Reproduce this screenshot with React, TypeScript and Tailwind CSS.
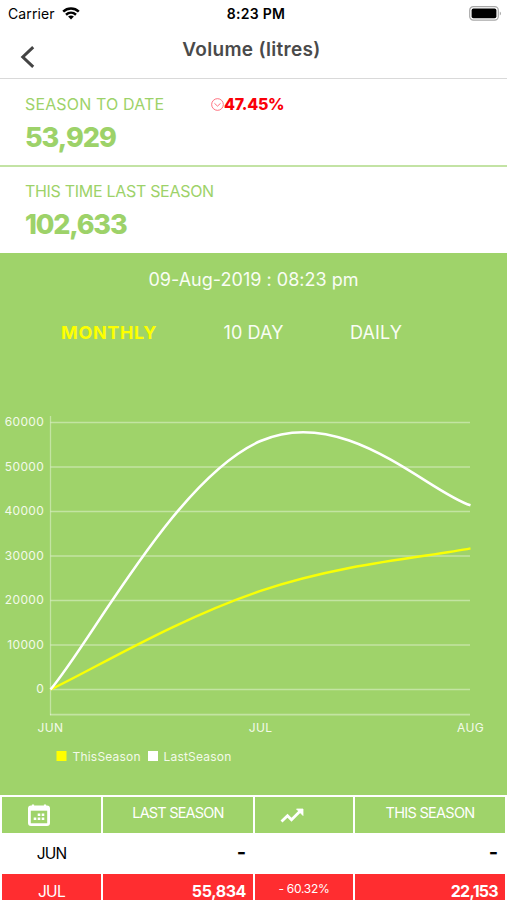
import type { ReactNode } from "react";

type Point = { x: number; y: number };

const ticks = [60000, 50000, 40000, 30000, 20000, 10000, 0];
const months = ["JUN", "JUL", "AUG"];
const thisSeason = [0, 22153, 31700];
const lastSeason = [0, 55834, 41380];

const toX = (i: number) => 50.5 + i * 210;
const toY = (value: number) => 289.5 - value * 0.00445;

// cubic line through every value
function curve(values: number[]) {
  const pts: Point[] = values.map((v, i) => ({ x: toX(i), y: toY(v) }));
  let d = `M${pts[0].x} ${pts[0].y}`;
  for (let i = 1; i < pts.length; i++) {
    const before = pts[Math.max(i - 2, 0)];
    const prev = pts[i - 1];
    const cur = pts[i];
    const next = pts[Math.min(i + 1, pts.length - 1)];
    d += ` C${prev.x + (cur.x - before.x) * 0.2} ${prev.y + (cur.y - before.y) * 0.2}`;
    d += ` ${cur.x - (next.x - prev.x) * 0.2} ${cur.y - (next.y - prev.y) * 0.2}`;
    d += ` ${cur.x} ${cur.y}`;
  }
  return d;
}

function StatusBar() {
  return (
    <div className="grid h-7 grid-cols-3 items-center pl-2 pr-[5px] text-black">
      <div className="flex items-center gap-[7px]">
        <span className="text-[14px] leading-5 tracking-[0.1px]">Carrier</span>
        <svg className="-mt-0.5" width="18" height="13" viewBox="0 0 18 13" fill="none" stroke="#000" strokeWidth="2.5">
          <path d="M1.2 4.6C5.6 0.4 12.4 0.4 16.8 4.6" />
          <path d="M4 7.7C6.9 5.1 11.1 5.1 14 7.7" />
          <path d="M6.1 9.5C7.8 8.1 10.2 8.1 11.9 9.5L9 12.6Z" fill="#000" stroke="none" />
        </svg>
      </div>
      <span className="-mt-0.5 whitespace-nowrap pl-0.5 text-center text-[14px] font-semibold tracking-[0.3px]">
        8:23 PM
      </span>
      <svg className="-mt-0.5 justify-self-end" width="33" height="15" viewBox="0 0 33 15">
        <rect x="0.7" y="0.7" width="28.6" height="13.4" rx="3.6" fill="#fff" stroke="#a8a8a8" strokeWidth="1.2" />
        <rect x="2.6" y="2.6" width="24.8" height="9.6" rx="1.8" fill="#000" />
        <path d="M30.8 5.5C32.2 6 32.2 9 30.8 9.5Z" fill="#999" />
      </svg>
    </div>
  );
}

function Header() {
  return (
    <header className="grid h-[51px] grid-cols-[60px_1fr_60px] border-b border-[#d9d9d9]">
      <button className="flex items-start pl-5 pt-[18px]">
        <svg width="15" height="22" viewBox="0 0 15 22" fill="none" stroke="#444" strokeWidth="3">
          <path d="M13.2 1.2L2.8 11L13.2 20.8" />
        </svg>
      </button>
      <h1 className="pt-2 pr-1 text-center text-[19px] leading-7 font-semibold tracking-[0.3px] text-[#4a4a4a]">
        Volume (litres)
      </h1>
    </header>
  );
}

function Summary() {
  return (
    <section className="text-[#9dd269]">
      <div className="h-[88px] border-b-2 border-[#c3e3a4] pt-[13px] pl-[25px]">
        <div className="flex h-6 items-center">
          <span className="w-[186px] text-[16px] tracking-[0.15px]">SEASON TO DATE</span>
          <svg width="13" height="13" viewBox="0 0 12 12" fill="none" stroke="#ff5c6c" strokeWidth="0.8">
            <circle cx="6" cy="6" r="5.4" />
            <path d="M3.2 4.9L6 7.5L8.8 4.9" />
          </svg>
          <span className="text-[16px] font-extrabold tracking-[-0.3px] text-[#fa0008]">47.45%</span>
        </div>
        <p className="mt-1 text-[27px] leading-9 font-extrabold tracking-[-1px]">53,929</p>
      </div>
      <div className="h-[86px] pt-3 pl-[25px]">
        <p className="text-[16px] leading-6 tracking-[-0.3px]">THIS TIME LAST SEASON</p>
        <p className="mt-1 text-[27px] leading-9 font-extrabold tracking-[-1.2px]">102,633</p>
      </div>
    </section>
  );
}

function Chart() {
  return (
    <svg className="block" width="507" height="395" viewBox="0 0 507 395" fill="none">
      <g stroke="#fff" strokeOpacity="0.38" strokeWidth="1.6">
        <path d="M50.5 16V315.2" strokeWidth="1.3" />
        <path d="M50 314.6H470" />
        {ticks.map((t) => (
          <path key={t} d={`M50.5 ${toY(t)}H470`} />
        ))}
      </g>
      <g fill="#f3fae9" fontSize="12" letterSpacing="0.35">
        {ticks.map((t) => (
          <text key={t} x="44.2" y={toY(t) + 3.6} textAnchor="end">
            {t}
          </text>
        ))}
        {months.map((m, i) => (
          <text key={m} x={toX(i)} y="331.5" textAnchor="middle">
            {m}
          </text>
        ))}
        <text x="72.5" y="360.5" letterSpacing="0.2">ThisSeason</text>
        <text x="163.5" y="360.5" letterSpacing="0.2">LastSeason</text>
      </g>
      <rect x="56.5" y="351" width="10" height="10" fill="#ffff00" />
      <rect x="148" y="351" width="10" height="10" fill="#fff" />
      <path d={curve(thisSeason)} stroke="#f8ff05" strokeWidth="2.4" />
      <path d={curve(lastSeason)} stroke="#fff" strokeWidth="2.6" />
    </svg>
  );
}

function ChartPanel() {
  return (
    <section className="flex h-[542px] flex-col bg-[#9fd36a] text-[#f9fdf4]">
      <p className="pt-[15px] text-center text-[18px] leading-6 tracking-[0.02px]">
        09-Aug-2019 : 08:23 pm
      </p>
      <div className="mt-[29px] flex text-[18px] leading-6">
        <button className="w-[162px] pl-[61px] text-left font-bold tracking-[0.65px] text-[#fdff00]">
          MONTHLY
        </button>
        <button className="w-[183px] text-center tracking-[0.1px]">10 DAY</button>
        <button className="w-[62px] text-center tracking-[0.1px]">DAILY</button>
      </div>
      <div className="mt-auto">
        <Chart />
      </div>
    </section>
  );
}

function Row({ className, children }: { className: string; children: ReactNode }) {
  return (
    <div className={`grid grid-cols-[99px_150px_98px_150px] gap-x-[2px] pl-[2px] ${className}`}>
      {children}
    </div>
  );
}

function Table() {
  return (
    <section>
      <Row className="h-[38px] pt-[1.5px] text-[14.5px] leading-8 text-white [&>div]:h-[36.5px] [&>div]:bg-[#9fd36a]">
        <div className="pl-[26px] pt-[7.5px]">
          <svg width="22" height="22" viewBox="0 0 22 22" fill="none">
            <path d="M5 0.5V4M17 0.5V4" stroke="#fff" strokeWidth="2.2" />
            <rect x="1.4" y="3" width="19.2" height="17.6" rx="1.6" stroke="#fff" strokeWidth="2.8" />
            <path d="M1 4.5H21" stroke="#fff" strokeWidth="4.4" />
            <path d="M9.7 9.5H12.3V12H9.7ZM13.7 9.5H16.3V12H13.7ZM5.7 13.5H8.3V16H5.7ZM9.7 13.5H12.3V16H9.7ZM13.7 13.5H16.3V16H13.7Z" fill="#fff" />
          </svg>
        </div>
        <div className="text-center tracking-[-0.8px]">LAST SEASON</div>
        <div className="pl-[25px] pt-[11px]">
          <svg width="24" height="16" viewBox="0 0 24 16" fill="none">
            <path d="M1.5 13.5L7.5 7.7L11.5 11.7L20 3.2" stroke="#fff" strokeWidth="2.8" />
            <path d="M16.5 1H23V7.5Z" fill="#fff" stroke="#fff" strokeWidth="0.8" />
          </svg>
        </div>
        <div className="text-center tracking-[-0.7px]">THIS SEASON</div>
      </Row>
      <Row className="h-[41px] items-center text-[15.5px] text-black">
        <div className="text-center tracking-[-0.8px]">JUN</div>
        <div className="flex justify-end pr-[7px]">
          <Dash />
        </div>
        <div />
        <div className="flex justify-end pr-[7px]">
          <Dash />
        </div>
      </Row>
      <Row className="h-[26px] text-[16px] leading-[35px] text-white [&>div]:h-[26px] [&>div]:overflow-hidden [&>div]:bg-[#ff2d30]">
        <div className="text-center text-[15.5px] tracking-[-0.7px]">JUL</div>
        <div className="pr-[7px] text-right font-bold tracking-[-0.4px]">55,834</div>
        <div className="text-center text-[12px] leading-[30px] tracking-[-0.3px]">- 60.32%</div>
        <div className="pr-[7px] text-right font-bold tracking-[-0.7px]">22,153</div>
      </Row>
    </section>
  );
}

function Dash() {
  return <span className="-mt-1 text-[20px] leading-6 font-bold">-</span>;
}

export default function App() {
  return (
    <div className="h-[900px] w-[507px] overflow-hidden bg-white font-['Inter','Liberation_Sans',sans-serif]">
      <StatusBar />
      <Header />
      <Summary />
      <ChartPanel />
      <Table />
    </div>
  );
}
